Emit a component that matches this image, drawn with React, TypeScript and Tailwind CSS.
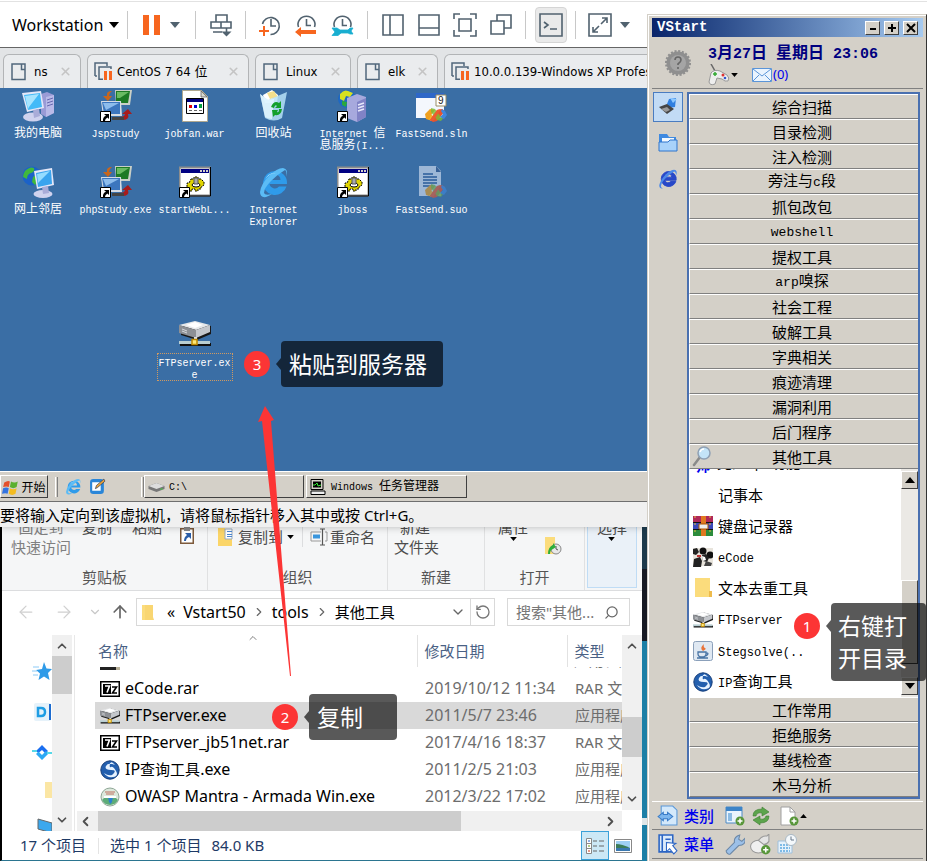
import type { ReactNode } from "react";
import { ArrowLeft, ArrowRight, ArrowUp, ChevronDown, ChevronLeft, ChevronRight, ChevronUp, RotateCw, Search, X } from "lucide-react";

const UI = "font-['Noto_Sans','Noto_Sans_CJK_SC',sans-serif]";
const SONG = "font-['Noto_Sans_CJK_SC',sans-serif]";
const MONO = "font-['Liberation_Mono','Noto_Sans_CJK_SC',monospace]";
const TAB = "font-['DejaVu_Sans_Condensed','Noto_Sans_CJK_SC',sans-serif]";
const RAISED = "border border-t-white border-l-white border-r-[#404040] border-b-[#404040] bg-[#d4d0c8]";

/* Half-width characters get a size (and face) of their own beside the full-width ones. */
function Mixed({ text, latin }: { text: string; latin: string }) {
  return (
    <>
      {text.split(/([\x20-\x7e]+)/).map((part, i) =>
        i % 2 ? <span key={i} className={latin}>{part}</span> : part
      )}
    </>
  );
}

function Song({ text, latin = "text-[10px]" }: { text: string; latin?: string }) {
  return <Mixed text={text} latin={`${MONO} ${latin}`} />;
}

function Caret({ className = "text-black", up = false }: { className?: string; up?: boolean }) {
  return (
    <svg width="10" height="6" viewBox="0 0 10 6" className={className} aria-hidden="true">
      <path d={up ? "M0 6h10L5 0z" : "M0 0h10L5 6z"} fill="currentColor" />
    </svg>
  );
}

function SmallCaret({ className = "", up = false }: { className?: string; up?: boolean }) {
  return (
    <svg width="7" height="4" viewBox="0 0 10 6" className={`shrink-0 ${className}`} aria-hidden="true">
      <path d={up ? "M0 6h10L5 0z" : "M0 0h10L5 6z"} />
    </svg>
  );
}

/* ---------- drawings ---------- */

function Svg({ size = 32, box = 32, children }: { size?: number; box?: number; children: ReactNode }) {
  return (
    <svg width={size} height={size} viewBox={`0 0 ${box} ${box}`} className="shrink-0" aria-hidden="true">
      {children}
    </svg>
  );
}

function Shortcut() {
  return (
    <g>
      <path d="M.5 21.500h10v10H.5z" fill="#fff" stroke="#000" />
      <path d="M4 24h5v5L7.500 27.500Q5 28.500 5 31H3Q2.500 27 6 25.700z" fill="#000" />
    </g>
  );
}

const computer = (
  <Svg>
    <path d="M19 4l6-2 7 3v18l-8 4-5-3z" fill="#9a9bd6" />
    <path d="M24 7l8-2v18l-8 4z" fill="#b9bae8" />
    <path d="M25 10l6-2M25 13l6-2M25 16l6-2" stroke="#6668b0" />
    <path d="M0 3l19-2 3 17-17 4z" fill="#e4e7f8" />
    <path d="M2 5l16-2 2 14-14 3z" fill="#42baf8" />
    <path d="M3 6l14-2-10 13-1 2z" fill="#a6e4ff" />
    <ellipse cx="11" cy="27" rx="10" ry="4.500" fill="#cfd2ee" />
    <path d="M11 20l6-1 1 7-6 2z" fill="#a9acd8" />
  </Svg>
);

const network = (
  <Svg>
    <circle cx="10" cy="10" r="9.500" fill="#1b62c8" />
    <path d="M3 5q5-5 9-3 1 4-3 5t-4 6l-4-2q0-3 2-6zM11 11l5-3 2 6-5 5-3-3z" fill="#41b83c" />
    <path d="M12 5l18-3 2 17-17 4z" fill="#e4e7f8" />
    <path d="M14 7l15-3 1 14-14 3z" fill="#3aa4ee" />
    <path d="M15 8l13-3-12 12z" fill="#95dcff" />
    <ellipse cx="21" cy="28" rx="9.500" ry="4" fill="#cfd2ee" />
    <path d="M20 21l6-1 1 7-6 1z" fill="#a9acd8" />
  </Svg>
);

const study = (
  <Svg>
    <path d="M15 0h17l-2 15H16z" fill="#c9cfc6" />
    <path d="M16 1h14l-2 12H16z" fill="#1d7a24" />
    <path d="M17 2h12l-9 6h-3z" fill="#69ba62" />
    <path d="M1 11h20l1 15H3z" fill="#d6dce4" />
    <path d="M2 12h18v12H4z" fill="#3c76be" />
    <path d="M3 13h16L6 20z" fill="#8dbcec" />
    <path d="M12 1Q6 1 7 6H3l5 5 4-5H9q0-3 3-5z" fill="#c8661c" />
    <path d="M22 30q8 0 6-6h4l-4-5-6 5h3q0 3-6 3z" fill="#a81c1c" />
    <path d="M12 27h12v3H12z" fill="#444" />
    <Shortcut />
  </Svg>
);

const warFile = (
  <Svg>
    <path d="M3.500.5h19l6 6v25h-25z" fill="#fff" stroke="#b0a890" />
    <path d="M22 1v6h6z" fill="#d8d8d0" stroke="#555" strokeWidth=".7" />
    <path d="M7.500 8.500h17v15h-17z" fill="#fff" stroke="#000" />
    <path d="M8 9h16v3H8z" fill="#00007c" />
    <path d="M10 15h3v3h-3z" fill="#e00000" />
    <path d="M15 15h3v3h-3z" fill="#0000d0" />
    <path d="M20 14h3v4h-3z" fill="#00a040" />
    <path d="M10 20.500h3m2 0h3m2 0h3" stroke="#666" />
  </Svg>
);

const recycle = (
  <Svg>
    <path d="M5 5l9-5 6 5-1 8H7z" fill="#fff" />
    <path d="M9 3l7-2 4 6-8 2z" fill="#f2df8c" />
    <path d="M2 4l8 6 19-8-5 26q-8 5-17 0z" fill="#b7e2f7" opacity=".85" />
    <path d="M2 4l8 6 6-1-2 20q-4 0-7-2z" fill="#e6f7ff" opacity=".8" />
    <path d="M13 17q3-7 8-4l2-2v7h-6l2-2q-2-2-3 2zM24 19q-1 7-7 6l-2 2-1-7h6l-1 2q2 1 2-3z" fill="#14a02c" />
  </Svg>
);

const iisServer = (
  <Svg>
    <circle cx="10" cy="9" r="9" fill="#1d68c4" />
    <path d="M3 4q4-5 8-3l5 2-3 4-4-1-2 5-4-2z" fill="#d7e020" />
    <path d="M5 11l5 1-1 5-4-2z" fill="#2aa83c" />
    <path d="M10 8l10-4 9 3v20l-9 5-10-4z" fill="#a7a9dd" />
    <path d="M20 12l9-4v19l-9 5z" fill="#8183c6" />
    <path d="M21 15l6-2M21 18l6-2M21 21l6-2" stroke="#e7e8fb" strokeWidth="1.500" />
    <Shortcut />
  </Svg>
);

const swoosh = (
  <g>
    <path d="M14 20l-4 4 2 5 3 2 3-4-3-3 2-2z" fill="#f5b52a" />
    <path d="M9 24l5-5 5 1-4 5-2 5-3-1z" fill="#f0a020" />
    <path d="M14 30l7-10 5-1 3 2-8 10-4 1z" fill="#e8532c" />
    <path d="M15 18l4 1 5 7 4 1-3 4-4-1-6-8z" fill="#7cbd34" opacity=".8" />
    <path d="M26 19l3 2 2 4-3 4-4-2 3-3-2-3z" fill="#3f87dd" />
    <path d="M14 30l7-10 4-1-7 11-3 1z" fill="#ee5c30" />
  </g>
);

const slnFile = (
  <Svg>
    <path d="M0 3h28v25H0z" fill="#f4f7fd" />
    <path d="M0 3h28v5H0z" fill="#2e67c8" />
    <path d="M20 5h10v11H20z" fill="#fff" stroke="#9a8d65" />
    <text x="22" y="14" fontSize="10" fill="#222" fontFamily="Liberation Sans">9</text>
    {swoosh}
  </Svg>
);

const suoFile = (
  <Svg>
    <g opacity=".6">
      <path d="M3 0h17l5 5v25H3z" fill="#dfe9f8" />
      <path d="M20 0v6h5z" fill="#34588e" />
      <path d="M7 8h10M7 11h14M7 14h14M7 17h14M7 20h10" stroke="#205090" strokeWidth="1.500" />
      {swoosh}
    </g>
  </Svg>
);

const ieGlyph = (size: number) => (
  <Svg size={size}>
    <path d="M17 5a12 12 0 1 0 11.500 15.500H21a5.500 5.500 0 0 1-9.500-2.500h17.500A12 12 0 0 0 17 5zM11.500 14a5.500 5.500 0 0 1 11 0z" fill="#2f9bea" fillRule="evenodd" />
    <path d="M28 11q3-8-3-9-6 0-14 8T2 26q0 6 6 5 3-1 6-3-7 2-8-1 0-5 7-12T27 4q2 1 1 7z" fill="#5bbcf6" />
    <path d="M7 14q3-8 11-7-7 0-11 7z" fill="#b8e6ff" />
  </Svg>
);

const gearWindow = (
  <Svg>
    <path d="M.5 1.500h31v28H.5z" fill="#fff" stroke="#8c8c8c" strokeWidth="2" />
    <path d="M31.500 1v29H1" fill="none" stroke="#000" />
    <path d="M2 3h28v4H2z" fill="#000082" />
    <path d="M21 4h2v2h-2zM24 4h2v2h-2zM27 4h2v2h-2z" fill="#d4d0c8" />
    <path d="M12 13h3v-2h4v2h3l3 3v3l-3 2v2h-3v2h-3v-2h-3v2h-3v-3H8v-5h2z" fill="#e0d400" stroke="#000" strokeDasharray="2 1" />
    <ellipse cx="17" cy="19" rx="4" ry="2" fill="#fff" stroke="#000" />
    <path d="M15 12h4v6h-4z" fill="#aaa" stroke="#555" />
    <Shortcut />
  </Svg>
);

const drive = (size: number) => (
  <Svg size={size}>
    <path d="M2 8l15-4 15 4v8l-14 6-16-5z" fill="#181818" />
    <path d="M0 7l16-4 15 4-14 5z" fill="#e6e8ea" />
    <path d="M0 7l17 5v8L0 15z" fill="#8d9095" />
    <path d="M17 12l14-5v7l-14 6z" fill="#c4c7cc" />
    <path d="M7 7l9-3 8 3-8 3z" fill="#fff" />
    <path d="M3 11l5 2M3 13l5 2" stroke="#d6d8dc" />
    <path d="M15 19h3v5h-3z" fill="#ddd" />
    <path d="M1 25h31v3H1z" fill="#111" />
    <path d="M0 23h31v3H0z" fill="#b8ced2" />
    <path d="M13 21.500h5v5h-5z" fill="#ffe878" stroke="#c08a00" strokeWidth="1.500" />
  </Svg>
);

const folder = (
  <svg width="20" height="20" viewBox="0 0 20 20" className="shrink-0" aria-hidden="true">
    <path d="M2 0h15v14l2 1v4H2z" fill="#fbdc7c" />
    <path d="M16 13h3v6h-3z" fill="#eebb4c" />
  </svg>
);

const sevenZip = (
  <svg width="20" height="16" viewBox="0 0 20 16" className="shrink-0" aria-hidden="true">
    <path d="M.75.75h18.500v14.500H.75z" fill="#fff" stroke="#000" strokeWidth="1.500" />
    <path d="M3 3h8v10H3z" />
    <path d="M5 5h4.500L7 11.500" stroke="#fff" strokeWidth="1.600" fill="none" />
    <path d="M12 6h4.500L12.500 12H17" stroke="#000" strokeWidth="1.600" fill="none" />
  </svg>
);

const ipTool = (
  <Svg size={20} box={20}>
    <circle cx="10" cy="10" r="9.200" fill="#235fae" stroke="#153c78" />
    <path d="M15 5Q8 2 6 6t5 4 1 5q-4 1-8-2 3 5 9 4t3-6-5-4-1-3 5 1z" fill="#e6f2ff" />
  </Svg>
);

const mantra = (
  <Svg size={20} box={20}>
    <circle cx="10" cy="10" r="9" fill="#dce8dc" stroke="#8fa796" />
    <path d="M2 13a9 9 0 0 0 16 0l-3-3H5z" fill="#5dab78" />
    <path d="M5 5h10M6 7h8" stroke="#c07060" />
    <path d="M8 10h5l-1 5-1.500 2L9 15z" fill="#2b80d0" />
    <path d="M4 9h12v2H4z" fill="#fff" />
  </Svg>
);

/* ---------- workstation toolbar ---------- */

function PageIcon() {
  return (
    <svg width="16" height="18" viewBox="0 0 16 18" className="shrink-0" aria-hidden="true">
      <path d="M10.500 1H1v15.500h13V7M10.500 1v5.500H14V1z" fill="none" stroke="#51677c" strokeWidth="1.500" />
    </svg>
  );
}

function PausedIcon() {
  return (
    <svg width="19" height="19" viewBox="0 0 19 19" className="shrink-0" aria-hidden="true">
      <path d="M1 14V1h12v3M5 18V5h12v2M1 14h2M5 17.300h4" fill="none" stroke="#51677c" strokeWidth="1.500" />
      <path d="M10 9h3v9h-3zM15 9h3v9h-3z" fill="#f7661f" />
    </svg>
  );
}

function Tool({ label, children }: { label: string; children: ReactNode }) {
  return (
    <button aria-label={label} className="flex w-9 shrink-0 items-center justify-center">
      <svg width="24" height="24" viewBox="0 0 24 24" fill="none" stroke="#51626f" strokeWidth="1.600" aria-hidden="true">
        {children}
      </svg>
    </button>
  );
}

function Group({ className, children }: { className: string; children: ReactNode }) {
  return <div className={`flex h-7 shrink-0 items-center border-r border-[#c8c8c8] ${className}`}>{children}</div>;
}

const clock = <path d="M4.500 14a8.500 8 0 1 1 16 0M12.500 6v6.500h4.500" />;

function Toolbar() {
  return (
    <header className={`flex h-[46px] items-center overflow-hidden border-b border-[#666] bg-white ${UI}`}>
      <Group className="w-32 pl-3">
        <button className="flex items-center gap-[6px] text-base">Workstation <Caret /></button>
      </Group>
      <Group className="w-[68px] justify-center gap-[10px]">
        <button aria-label="Suspend" className="flex gap-[5px]">
          <span className="h-5 w-[6px] bg-[#f7661f]" />
          <span className="h-5 w-[6px] bg-[#f7661f]" />
        </button>
        <button aria-label="Power options"><Caret className="text-[#51626f]" /></button>
      </Group>
      <Group className="w-[50px] justify-center">
        <Tool label="Send Ctrl+Alt+Del">
          <path d="M7 2h11v7H7zM2 9h20v6H2zM12 9v6M4 19h9M17.500 15v4" />
          <path d="M12.500 18.500h10l-5 5z" fill="#51626f" stroke="none" />
        </Tool>
      </Group>
      <Group className="w-[122px] pl-[6px]">
        <Tool label="Take snapshot">
          <path d="M4.500 11a8.500 8.500 0 1 1 8 10.500M13 6v7h5" />
          <path d="M1 18h10M6 13v10" stroke="#f7661f" strokeWidth="2" />
        </Tool>
        <Tool label="Revert snapshot">
          {clock}
          <path d="M1 19l6-5v3h15v4H7v3z" fill="#f7661f" stroke="none" />
        </Tool>
        <Tool label="Manage snapshots">
          {clock}
          <path d="M2 15h5l3 2h8l2-2h3l-2 3 2 3h-3l-2-1h-7l-3 2.500H2l3-3.500z" fill="#19aed0" stroke="#19aed0" strokeWidth=".8" />
        </Tool>
      </Group>
      <Group className="w-[158px] pl-[7px]">
        <Tool label="Show library"><path d="M2 2h20v20H2zM9 2v20" /></Tool>
        <Tool label="Show thumbnails"><path d="M2 2h20v20H2zM2 15h20" /></Tool>
        <Tool label="Full screen"><path d="M1 6V1h6M17 1h6v5M23 17v6h-6M7 23H1v-6M6 6h12v12H6z" /></Tool>
        <Tool label="Unity"><path d="M8 8V2h14v13h-7M2 8h13v13H2z" /></Tool>
      </Group>
      <Group className="w-[50px] justify-center">
        <button aria-label="Console view" className="flex h-9 w-8 shrink-0 items-center justify-center rounded border border-[#d5d5d5] bg-[#eaeaea]">
          <svg width="24" height="24" viewBox="0 0 24 24" fill="none" stroke="#51626f" strokeWidth="1.600" aria-hidden="true">
            <path d="M1 1h22v22H1zM5 9l4 3-4 3M11 16h7" />
          </svg>
        </button>
      </Group>
      <div className="flex items-center gap-[2px] pl-[6px]">
        <Tool label="Stretch guest">
          <path d="M1 1h22v22H1zM13 11l6-6M14 5h5v5M11 13l-6 6M5 14v5h5" />
        </Tool>
        <button aria-label="Stretch options"><Caret className="text-[#51626f]" /></button>
      </div>
    </header>
  );
}

function Tabs() {
  const tabs = [
    { name: "ns", paused: false, width: "w-[78px]" },
    { name: "CentOS 7 64 位", paused: true, width: "w-[162px]" },
    { name: "Linux", paused: false, width: "w-[96px]" },
    { name: "elk", paused: false, width: "w-[81px]" },
    { name: "10.0.0.139-Windows XP Professional", paused: true, width: "w-[300px]" },
  ];
  return (
    <nav className={`flex h-10 items-end gap-[6px] overflow-hidden bg-[#e2e4e6] pl-[3px] text-[13px] ${TAB}`}>
      {tabs.map((t) => (
        <div key={t.name} className={`flex h-[34px] shrink-0 items-center rounded-t-md border border-b-0 border-[#b2b4b6] bg-[#eaecee] pr-2 ${t.paused ? "pl-[6px]" : "pl-[7px]"} ${t.width}`}>
          <button className={`flex items-center whitespace-nowrap ${t.paused ? "gap-1" : "gap-[7px]"}`}>
            {t.paused ? <PausedIcon /> : <PageIcon />}
            {t.name}
          </button>
          <button aria-label={`Close ${t.name}`} className="ml-auto text-[#c4c4c4]"><X size={13} strokeWidth={3} /></button>
        </div>
      ))}
    </nav>
  );
}

/* ---------- guest desktop ---------- */

function DesktopIcon({ icon, label, picked = false }: { icon: ReactNode; label: string[]; picked?: boolean }) {
  return (
    <button className={`flex flex-col items-center text-xs leading-3 text-white ${picked ? "col-start-3 row-start-4" : ""}`}>
      {icon}
      <span className={picked ? "mt-[3px] w-[76px] border border-dotted border-[#d09a60] py-px" : "mt-1 whitespace-nowrap"}>
        {label.map((line) => (
          <span key={line} className="block h-3 text-left whitespace-pre first:text-center last:text-center"><Song text={line} /></span>
        ))}
      </span>
    </button>
  );
}

function Desktop() {
  return (
    <section className={`grid h-[383px] auto-rows-[76px] grid-cols-[76px_79px_79px_79px_79px_79px] overflow-hidden bg-[#3a6ea5] pt-[2px] ${SONG}`}>
      <DesktopIcon icon={computer} label={["我的电脑"]} />
      <DesktopIcon icon={study} label={["JspStudy"]} />
      <DesktopIcon icon={warFile} label={["jobfan.war"]} />
      <DesktopIcon icon={recycle} label={["回收站"]} />
      <DesktopIcon icon={iisServer} label={["Internet 信", "息服务(I..."]} />
      <DesktopIcon icon={slnFile} label={["FastSend.sln"]} />
      <DesktopIcon icon={network} label={["网上邻居"]} />
      <DesktopIcon icon={study} label={["phpStudy.exe"]} />
      <DesktopIcon icon={gearWindow} label={["startWebL..."]} />
      <DesktopIcon icon={ieGlyph(32)} label={["Internet", "Explorer"]} />
      <DesktopIcon icon={gearWindow} label={["jboss"]} />
      <DesktopIcon icon={suoFile} label={["FastSend.suo"]} />
      <DesktopIcon icon={drive(32)} label={["FTPserver.ex", "e"]} picked />
    </section>
  );
}

function Grip() {
  return <span className="h-5 w-[3px] border-r border-l border-r-[#808080] border-l-white" />;
}

function Taskbar() {
  return (
    <footer className={`flex h-[31px] items-center border-t border-b border-t-white border-b-[#707070] bg-[#d4d0c8] text-xs leading-4 ${SONG}`}>
      <button className={`flex h-[23px] w-12 items-center justify-center gap-px ${RAISED}`}>
        <Svg size={18} box={16}>
          <path d="M2 4q3-2 5-1L6 8Q4 7 1 8z" fill="#e4502c" />
          <path d="M8 3q3 2 6 0l-1 5q-3 2-6 0z" fill="#5cb030" />
          <path d="M1 9q3-1 5 0l-1 5q-2-1-5 0z" fill="#3474e0" />
          <path d="M7 9q3 2 6 0l-1 5q-3 2-6 0z" fill="#f4bc20" />
        </Svg>
        开始
      </button>
      <div className="flex w-24 items-center gap-[7px] pl-[7px]">
        <Grip />
        <button aria-label="Internet Explorer">{ieGlyph(17)}</button>
        <button aria-label="Show desktop">
          <Svg size={17} box={16}>
            <rect x="1" y="1" width="13" height="14" rx="3" fill="#2a86d8" />
            <path d="M3 4h8v8H3z" fill="#fff" />
            <path d="M6 10l1-3 7-6 1 2-7 6z" fill="#e8a33c" stroke="#235" strokeWidth=".6" />
          </Svg>
        </button>
        <span className="ml-auto flex"><Grip /></span>
      </div>
      <button className={`flex h-[23px] w-40 items-center gap-1 pl-[3px] ${RAISED}`}>
        <svg width="17" height="16" viewBox="0 0 16 16" aria-hidden="true">
          <path d="M0 7l8-3 8 3v3l-8 3-8-3z" fill="#777" />
          <path d="M0 7l8-3 8 3-8 3z" fill="#ddd" />
          <path d="M12 10h2" stroke="#3d3" />
        </svg>
        <span><Song text="C:\" /></span>
      </button>
      <button className={`ml-[2px] flex h-[23px] w-[161px] items-center gap-1 pl-[3px] whitespace-pre ${RAISED}`}>
        <svg width="17" height="16" viewBox="0 0 17 16" aria-hidden="true">
          <path d="M1 .5h12v10H1z" fill="#d4d0c8" stroke="#000" />
          <path d="M3 2.500h8v6H3z" />
          <path d="M3 6h2l2-2 1 3 3-1" stroke="#3e3" fill="none" />
          <path d="M1 12h14v3.500H1z" fill="#eee" stroke="#000" />
        </svg>
        <span><Song text="Windows 任务管理器" /></span>
      </button>
    </footer>
  );
}

/* ---------- file explorer ---------- */

function RibbonGroup({ name, className, children }: { name: string; className: string; children: ReactNode }) {
  return (
    <div className={`flex shrink-0 flex-col ${className}`}>
      <div className="-mt-[10px] flex h-[50px] overflow-hidden">{children}</div>
      <span className="text-center leading-5 text-[#555]">{name}</span>
    </div>
  );
}

function Ribbon() {
  return (
    <div className="flex h-16 overflow-hidden border-b border-[#dcdddf] bg-[#f5f6f7] text-[15px] leading-5 text-[#4c4c4c]">
      <RibbonGroup name="剪贴板" className="w-[206px] border-r border-[#e0e1e2]">
        <button className="ml-2 w-[62px] shrink-0 self-start text-[#808080]">固定到<br />快速访问</button>
        <button className="ml-[10px] self-start">复制</button>
        <button className="ml-5 self-start">粘贴</button>
        <button aria-label="粘贴快捷方式" className="ml-[18px] self-start pt-[10px]">
          <svg width="14" height="17" viewBox="0 0 14 17" aria-hidden="true">
            <path d="M.75 1.750h12.500v14.500H.75z" fill="#fff" stroke="#7d5a3c" strokeWidth="1.500" />
            <path d="M4 0h6v4H4z" fill="#8a8a8a" />
            <path d="M5 6h6v6l-2-2q-3 1-3 4H4q0-4 3-6z" fill="#2a5ea8" />
          </svg>
        </button>
      </RibbonGroup>
      <RibbonGroup name="组织" className="w-[180px] border-r border-[#e0e1e2]">
        <button className="ml-[10px] flex shrink-0 items-center gap-[3px] self-start pt-[10px]">
          <svg width="17" height="18" viewBox="0 0 17 18" aria-hidden="true">
            <path d="M0 0h7v11h7v7H0z" fill="#fbd568" />
            <path d="M7 1h7v10H7z" fill="#fff" stroke="#9ab" />
            <path d="M9 3h5v1H9zM9 6h5v1H9zM9 8h5v1H9z" fill="#4a86d0" />
          </svg>
          复制到
          <SmallCaret className="ml-px" />
        </button>
        <button className="ml-2 flex shrink-0 items-center gap-[2px] self-start border-l border-[#dcdddf] pt-[10px] pl-[7px]">
          <svg width="18" height="18" viewBox="0 0 18 18" fill="none" aria-hidden="true">
            <path d="M11 4H1v9h10M15 4h2v9h-2" stroke="#999" />
            <path d="M3 6.500h7v4H3z" fill="#3a96dd" />
            <path d="M10 1h5M12.500 1v16M10 17h5" stroke="#555" strokeWidth="1.200" />
          </svg>
          重命名
        </button>
      </RibbonGroup>
      <RibbonGroup name="新建" className="w-[97px] border-r border-[#e0e1e2]">
        <button className="ml-[6px] self-start text-left"><span className="pl-[6px]">新建</span><br />文件夹</button>
      </RibbonGroup>
      <RibbonGroup name="打开" className="w-[100px] border-r border-[#e0e1e2]">
        <button className="ml-[13px] flex flex-col items-center self-start">
          属性
          <SmallCaret />
        </button>
        <button aria-label="历史记录" className="ml-4 pt-2">
          <svg width="18" height="18" viewBox="0 0 18 18" aria-hidden="true">
            <path d="M1 0h10v17H1z" fill="#fbdc7c" />
            <circle cx="12" cy="12" r="5" fill="#e8e8e8" stroke="#888" />
            <path d="M12 9v3l2 1" fill="none" stroke="#555" />
            <path d="M4 17q0-7 5-9v-2l3 4-3 2Q6 13 6 17z" fill="#2fae3a" />
          </svg>
        </button>
      </RibbonGroup>
      <div className="ml-[2px] flex h-[61px] w-[50px] flex-col items-center border border-t-0 border-[#bfdcf5] bg-[#eaf1f8]">
        <button className="-mt-[10px] flex flex-col items-center">
          选择
          <SmallCaret />
        </button>
      </div>
    </div>
  );
}

function AddressBar() {
  return (
    <div className="flex h-11 items-center pr-3 pb-[2px] pl-[14px] text-base leading-6">
      <button aria-label="后退" className="text-[#d0d0d0]"><ArrowLeft size={20} strokeWidth={1.500} /></button>
      <button aria-label="前进" className="ml-[18px] text-[#d0d0d0]"><ArrowRight size={20} strokeWidth={1.500} /></button>
      <button aria-label="最近位置" className="ml-[14px] text-[#c8c8c8]"><ChevronDown size={14} /></button>
      <button aria-label="上移" className="ml-2 text-[#666]"><ArrowUp size={20} strokeWidth={2} /></button>
      <nav className="ml-[6px] flex h-7 min-w-0 flex-1 items-center border border-[#d9d9d9]">
        <svg width="13" height="17" viewBox="0 0 13 17" className="ml-[5px] shrink-0" aria-hidden="true">
          <path d="M0 1h6v15H0z" fill="#fbdc7c" />
          <path d="M3 1h8v12l1 3H3z" fill="#f9d672" />
        </svg>
        <span className="ml-3">«</span>
        <button className="ml-2">Vstart50</button>
        <ChevronRight size={14} className="ml-[6px] shrink-0 text-[#666]" />
        <button className="ml-[6px]">tools</button>
        <ChevronRight size={14} className="ml-[6px] shrink-0 text-[#666]" />
        <button className="ml-[6px] text-[15px] whitespace-nowrap">其他工具</button>
        <button aria-label="历史位置" className="mr-1 ml-auto text-[#666]"><ChevronDown size={16} /></button>
        <button aria-label="刷新" className="flex h-full w-6 shrink-0 items-center justify-center border-l border-[#d9d9d9] text-[#777]"><RotateCw size={16} className="-scale-x-100" /></button>
      </nav>
      <div className="ml-3 flex h-7 w-[123px] items-center border border-[#d9d9d9] pr-[10px] pl-2">
        <input aria-label="搜索" placeholder={'搜索"其他...'} className="w-0 min-w-0 flex-1 text-[15px] outline-none placeholder:text-[#767676]" />
        <Search size={15} className="-scale-x-100 text-[#666]" />
      </div>
    </div>
  );
}

function VScroll({ offset, thumb }: { offset: string; thumb: string }) {
  return (
    <div className="flex w-5 shrink-0 flex-col items-center bg-[#f0f0f0] text-[#505050]">
      <ChevronUp size={14} strokeWidth={3} className="mt-1 shrink-0" />
      <div className={`w-full shrink-0 bg-[#cdcdcd] ${offset} ${thumb}`} />
      <ChevronDown size={14} strokeWidth={3} className="mt-auto mb-1 shrink-0" />
    </div>
  );
}

function Files() {
  const rows = [
    { icon: sevenZip, name: "eCode.rar", date: "2019/10/12 11:34", kind: "RAR 文件" },
    { icon: drive(20), name: "FTPserver.exe", date: "2011/5/7 23:46", kind: "应用程序", picked: true },
    { icon: sevenZip, name: "FTPserver_jb51net.rar", date: "2017/4/16 18:37", kind: "RAR 文件" },
    { icon: ipTool, name: "IP查询工具.exe", date: "2011/2/5 21:03", kind: "应用程序" },
    { icon: mantra, name: "OWASP Mantra - Armada Win.exe", date: "2012/3/22 17:02", kind: "应用程序" },
  ];
  return (
    <div className="relative min-w-0 flex-1 pl-5">
      <ChevronUp size={12} strokeWidth={1.500} className="absolute top-[-3px] left-[172px] text-[#555]" />
      <table className="w-full table-fixed border-collapse text-left text-[15px] whitespace-nowrap">
        <colgroup>
          <col />
          <col className="w-[150px]" />
          <col className="w-[55px]" />
        </colgroup>
        <thead>
          <tr className="h-8 text-[#4a6184]">
            <th className="p-0 pl-[3px] font-normal">名称</th>
            <th className="border-l border-[#e2e2e2] p-0 pl-[7px] font-normal">修改日期</th>
            <th className="border-l border-[#e2e2e2] p-0 pl-[7px] font-normal">类型</th>
          </tr>
        </thead>
        <tbody>
          <tr aria-hidden="true">
            <td className="p-0 pl-[5px]">
              <div className="flex h-2 items-start overflow-hidden"><span className="h-[3px] w-4 bg-[#222]" /><span className="h-[3px] w-1 bg-[#b8b098]" /></div>
            </td>
            <td />
            <td className="p-0 pl-[7px] text-[#6d6d6d]">
              <div className="flex h-2 items-end overflow-hidden leading-[29px]">应用程序</div>
            </td>
          </tr>
          {rows.map((r) => (
            <tr key={r.name} className={`h-[27px] leading-[27px] ${r.picked ? "bg-[#d9d9d9]" : ""}`}>
              <td className="p-0 pl-[5px]">
                <div className="flex h-[27px] items-center gap-[5px]">{r.icon}<span><Mixed text={r.name} latin="text-base leading-[27px]" /></span></div>
              </td>
              <td className="p-0 pl-2 text-base leading-[27px] text-[#6d6d6d]">{r.date}</td>
              <td className="overflow-hidden p-0 pl-2 text-[#6d6d6d]">{r.kind}</td>
            </tr>
          ))}
        </tbody>
      </table>
    </div>
  );
}

function Explorer() {
  return (
    <section className={`flex flex-1 flex-col border-b border-l-2 border-b-[#2b7590] border-l-black bg-white ${UI}`}>
      <Ribbon />
      <AddressBar />
      <div className="flex h-[196px]">
        <aside className="flex w-[50px] flex-col items-end gap-5 overflow-hidden pt-[27px]">
          <Svg size={20} box={20}>
            <path d="M12 0l2.500 6.500 5.500.5-4 4 1.500 7-5.500-3.500L6.500 18 8 11.500 4 8l6-1z" fill="#2f9be8" />
            <path d="M1 5h6M0 9h5M1 13h5" stroke="#8ccaf6" />
          </Svg>
          <Svg size={20} box={20}>
            <rect x="2" y="1" width="17" height="18" rx="2" fill="#e6f2fa" />
            <path d="M6 6h3q4 0 4 4t-4 4H6z" fill="none" stroke="#1e9de4" strokeWidth="2.500" />
            <path d="M18 2v16" stroke="#1c6cd0" strokeWidth="2" />
          </Svg>
          <Svg size={20} box={20}>
            <path d="M10 3l6 6-2.500 2.500L10 8l-3.500 3L4 9z" fill="#1a6ef0" />
            <path d="M10 18l-6-6 2.500-2.500L10 13l4-4 3 2z" fill="#2ba8f4" />
            <path d="M0 9h5M15 11h5" stroke="#56d8e8" strokeWidth="2" />
          </Svg>
          <span className="h-4 w-[7px] shrink-0 bg-[#fbe6a4]" />
          <Svg size={20} box={20}>
            <path d="M6 1l14 4v10L6 11z" fill="#3ca8ee" stroke="#666" />
            <path d="M0 14l8-1 8 3-8 2z" fill="#c8ccd0" />
          </Svg>
        </aside>
        <VScroll offset="mt-[3px]" thumb="h-[38px]" />
        <div className="ml-[2px] flex min-w-0 flex-1 border-l border-[#e8e8e8]">
          <div className="flex min-w-0 flex-1 flex-col">
            <div className="flex h-[175px] overflow-hidden"><Files /></div>
            <div className="mt-px ml-[2px] flex h-5 items-center bg-[#f0f0f0] text-[#505050]">
              <ChevronLeft size={15} strokeWidth={3} className="mr-[5px] ml-px shrink-0" />
              <div className="h-full w-[363px] bg-[#cdcdcd]" />
              <ChevronRight size={15} strokeWidth={3} className="mr-1 ml-auto shrink-0" />
            </div>
          </div>
          <div className="mb-[21px] flex"><VScroll offset="mt-16" thumb="h-10" /></div>
        </div>
      </div>
      <div className="flex h-[29px] items-center pl-[18px] text-[15px] whitespace-pre text-[#1e3a66]">
        <span>17 个项目</span>
        <span className="ml-3 h-4 border-l border-[#e4e4e4]" />
        <span className="ml-[11px]">选中 1 个项目</span>
        <span className="ml-[10px]">84.0 KB</span>
        <button aria-label="详细信息" className="mr-[5px] ml-auto flex h-[29px] w-7 items-center justify-center border border-[#3aa0d8] bg-[#cce8f6]">
          <svg width="18" height="16" viewBox="0 0 18 16" fill="none" aria-hidden="true">
            <path d="M.5.5h5v15h-5zM.5 5.500h5M.5 10.500h5" fill="#fff" stroke="#888" />
            <path d="M2 2.500h2v1H2z" fill="#26c" /><path d="M2 7.500h2v1H2z" fill="#691" /><path d="M2 12.500h2v1H2z" fill="#c31" />
            <path d="M7 3h4m2 0h5M7 8h4m2 0h5M7 13h4m2 0h5" stroke="#666" />
          </svg>
        </button>
        <button aria-label="大图标" className="mr-[10px]">
          <svg width="18" height="14" viewBox="0 0 18 14" aria-hidden="true">
            <path d="M.5.5h17v13H.5z" fill="#fff" stroke="#888" />
            <path d="M2 2h14v10H2z" fill="#9fd0f4" />
            <path d="M2 5q6 0 14 4v1H2z" fill="#3c7c58" /><path d="M2 9h14v3H2z" fill="#3a78b0" />
          </svg>
        </button>
      </div>
    </section>
  );
}

/* ---------- VStart launcher ---------- */

function Category({ name, icon }: { name: string; icon?: ReactNode }) {
  return (
    <button className="relative flex h-[25px] w-full items-center justify-center border-t border-b border-l border-t-white border-b-[#808080] border-l-white bg-[#d4d0c8] pr-1 text-[15px] leading-5">
      {icon && <span className="absolute top-0 left-px">{icon}</span>}
      <span><Song text={name} latin="text-[13px]" /></span>
    </button>
  );
}

const categories = ["综合扫描", "目录检测", "注入检测", "旁注与c段", "抓包改包", "webshell", "提权工具", "arp嗅探", "社会工程", "破解工具", "字典相关", "痕迹清理", "漏洞利用", "后门程序"];

const magnifier = (
  <Svg size={22} box={22}>
    <path d="M9 12l-6 8" stroke="#8a8a8a" strokeWidth="2.500" strokeLinecap="round" />
    <circle cx="13" cy="8" r="6" fill="#c4e4f8" stroke="#8fa0b4" strokeWidth="1.500" />
    <path d="M9 7q1-3 4-3" stroke="#fff" strokeWidth="1.500" fill="none" />
  </Svg>
);

const books = (
  <Svg size={20} box={20}>
    <path d="M0 0h20v6H0z" fill="#b02858" /><path d="M0 7h20v6H0z" fill="#3c48b8" /><path d="M0 14h20v6H0z" fill="#2c8c3c" />
    <path d="M0 6h20v1H0zM0 13h20v1H0z" fill="#111" />
    <path d="M8 0h5v20H8z" fill="#e07820" /><path d="M6 8h9v5H6z" fill="#eee" stroke="#a50" />
    <path d="M2 0v20M17 0v20" stroke="#e8c040" strokeDasharray="2 5" />
  </Svg>
);

const ecode = (
  <Svg size={20} box={20}>
    <path d="M0 1h20v18H0z" fill="#e8e4dc" />
    <circle cx="10" cy="4" r="3.500" fill="#111" />
    <circle cx="17" cy="8" r="3.500" fill="#111" />
    <path d="M0 2l4-1 2 4-3 3-3-1zM1 12l6-2 2 4-1 6H0zM9 8l4-1 3 4-2 4-4-1z" fill="#222" />
    <path d="M9 9l3 1 1 3-3 1z" fill="#fff" /><path d="M4 8h4v2H4z" fill="#b33" /><path d="M13 14l6 2-1 3h-7z" fill="#444" />
  </Svg>
);

const java = (
  <Svg size={20} box={20}>
    <rect x=".5" y=".5" width="19" height="19" rx="2" fill="#dfe8f2" stroke="#8ba0ba" />
    <path d="M10 10q-4-3 1-7-1 3 1 4t-2 3" fill="#e8743c" />
    <path d="M5 11h8v2q0 3-4 3t-4-3zM13 12q4 0 0 3M4 17h11" fill="none" stroke="#4873a4" strokeWidth="1.300" />
  </Svg>
);

function ToolList() {
  const items: { icon: ReactNode; name: string }[] = [
    { icon: <span className="size-5" />, name: "记事本" },
    { icon: books, name: "键盘记录器" },
    { icon: ecode, name: "eCode" },
    { icon: folder, name: "文本去重工具" },
    { icon: drive(20), name: "FTPserver" },
    { icon: java, name: "Stegsolve(.." },
    { icon: ipTool, name: "IP查询工具" },
  ];
  return (
    <div className="flex h-[228px] overflow-hidden bg-white">
      <div className="flex min-w-0 flex-1 flex-col pl-1 text-[15px]">
        <div className="flex h-[10px] shrink-0 items-end gap-1 overflow-hidden leading-[29px]">
          <span className="w-5 text-center font-bold text-[#0000ee]">师</span>
          <span className="whitespace-pre"><Song text="克隆ip 功能" latin="text-[13px]" /></span>
        </div>
        <ul className="flex h-[219px] shrink-0 flex-col">
          {items.map((it) => (
            <li key={it.name} className="flex flex-1">
              <button className="flex items-center gap-[5px] leading-5">
                {it.icon}
                <span><Song text={it.name} latin="text-[12px]" /></span>
              </button>
            </li>
          ))}
        </ul>
      </div>
      <div className="flex w-[17px] flex-col bg-[#ebe9e5] pt-[2px] pb-[2px]">
        <span className={`flex h-[18px] shrink-0 items-center justify-center ${RAISED}`}><Caret up /></span>
        <span className={`mt-[91px] h-[84px] shrink-0 ${RAISED}`} />
        <span className={`mt-auto flex h-[18px] shrink-0 items-center justify-center ${RAISED}`}><Caret /></span>
      </div>
    </div>
  );
}

const plus = (
  <g>
    <circle cx="15" cy="15" r="4.500" fill="#58963a" />
    <path d="M12.500 15h5M15 12.500v5" stroke="#fff" strokeWidth="1.500" />
  </g>
);

function TitleButton({ label, d }: { label: string; d: string }) {
  return (
    <button aria-label={label} className={`flex h-[14px] w-[15px] items-center justify-center ${RAISED}`}>
      <svg width="10" height="10" viewBox="0 0 10 10" aria-hidden="true"><path d={d} stroke="#000" strokeWidth="2" /></svg>
    </button>
  );
}

function Launcher() {
  return (
    <aside className={`relative mt-3 flex w-[280px] shrink-0 flex-col border-t border-r border-l border-t-[#d4d0c8] border-r-[#333] border-l-[#d4d0c8] bg-[#d4d0c8] ${SONG}`}>
      <div className="flex flex-1 flex-col border-t border-l border-white px-[3px] pt-[2px]">
        <div className="flex h-[19px] items-center gap-1 bg-linear-to-r from-[#0a246a] to-[#a6caf0] pr-[5px] pl-[5px]">
          <h1 className={`mr-auto text-[14px] font-bold text-white ${MONO}`}>VStart</h1>
          <TitleButton label="最小化" d="M2 6h6" />
          <TitleButton label="最大化" d="M1 5h8M5 1v8" />
          <TitleButton label="关闭" d="M1 1l8 8M9 1L1 9" />
        </div>
        <div className="flex h-[52px] items-center border-b border-[#808080] pl-3">
          <Svg size={28} box={28}>
            <circle cx="14" cy="14" r="11.500" fill="#8f8f8f" stroke="#8f8f8f" strokeWidth="3" strokeDasharray="2 1.600" />
            <circle cx="14" cy="14" r="8" fill="#a5a5a5" />
            <path d="M11 11q0-3 3-3t3 3q0 2-3 4v1M14 18v2" fill="none" stroke="#666" strokeWidth="1.600" />
          </Svg>
          <div className="ml-4">
            <p className="text-base leading-5 font-bold whitespace-pre text-[#000080]"><Song text="3月27日 星期日 23:06" latin="text-[15px]" /></p>
            <div className="flex h-5 items-center">
              <button aria-label="游戏" className="flex items-center gap-px">
                <Svg size={22} box={22}>
                  <path d="M3 0l4 7" stroke="#666" strokeWidth="1.500" />
                  <path d="M3 9q3-4 9-2l7 4q3 3 1 6-3 1-6-2l-5-1-2 6q-5 2-6-2z" fill="#eee" stroke="#999" />
                  <path d="M5 10h4M7 8v4" stroke="#3a3" strokeWidth="1.500" />
                  <circle cx="15" cy="11" r="1.500" fill="#d33" /><circle cx="17" cy="14" r="1.300" fill="#35c" />
                </Svg>
                <SmallCaret />
              </button>
              <button className={`ml-[14px] flex items-center gap-px text-[13px] text-[#0000ee] ${UI}`}>
                <svg width="20" height="14" viewBox="0 0 20 14" aria-hidden="true">
                  <path d="M.5.5h19v13H.5z" fill="#eaf4fe" stroke="#5b95d8" />
                  <path d="M1 1l9 7 9-7M1 13l6-6M19 13l-6-6" fill="none" stroke="#5b95d8" />
                </svg>
                (0)
              </button>
            </div>
          </div>
        </div>
        <div className="mt-[3px] flex gap-1 pr-[3px] pl-px">
          <nav className="flex w-[30px] flex-col items-center">
            <button aria-label="程序" className="flex size-[30px] items-center justify-center border border-[#4a7cc0] bg-[#c2dbf5]">
              <Svg size={20} box={20}>
                <path d="M9 7l2-5 7-1-1 9-7 1z" fill="#2f7fe0" /><path d="M12 1l3 5 4-4" fill="#8cc8ff" />
                <path d="M1 10l8-3 7 5-7 5z" fill="#444" /><path d="M3 12l6-2 3 3-4 2z" fill="#999" />
              </Svg>
            </button>
            <button aria-label="文件夹" className="mt-[11px]">
              <Svg size={20} box={20}>
                <path d="M1 1h8l2 3h7v14H1z" fill="#3f8ae0" /><path d="M4 5h12v8H4z" fill="#f4faff" />
                <path d="M1 18V9h9l2-2h7v11z" fill="#a8d2fa" stroke="#2e74cc" />
              </Svg>
            </button>
            <button aria-label="网址" className="mt-4">
              <Svg size={20}>
                <path d="M17 4a12 12 0 1 0 11.500 16H20a5 5 0 0 1-9-2h18A12 12 0 0 0 17 4zM11 13a5 5 0 0 1 11 0z" fill="#2848c8" fillRule="evenodd" stroke="#2848c8" strokeWidth="1.500" />
                <path d="M29 10q3-8-3-9-6 0-14 8T2 26q0 6 6 5-4-1-3-5 1-5 8-12T26 4q3 1 3 6z" fill="#4b88e8" />
              </Svg>
            </button>
          </nav>
          <div className="min-w-0 flex-1 border-2 border-[#4a70b0]">
            {categories.map((c) => <Category key={c} name={c} />)}
            <Category name="其他工具" icon={magnifier} />
            <ToolList />
            {["工作常用", "拒绝服务", "基线检查", "木马分析"].map((c) => <Category key={c} name={c} />)}
          </div>
        </div>
        <div className="mt-[2px] flex h-[29px] items-center border-t border-b border-t-white border-b-[#808080] pl-[5px] text-[15px] leading-5 text-[#0000ee]">
          <button className="flex items-center gap-[6px] font-medium">
            <Svg size={21} box={20}>
              <path d="M4 1h11l4 4v14H4z" fill="#d4e9fb" stroke="#5a98d8" />
              <path d="M1 11l5-4v2h4V7l5 4-5 4v-2H6v2z" fill="#7db6ee" stroke="#3a7cc8" />
            </Svg>
            类别
          </button>
          <button aria-label="添加窗口" className="ml-[11px]">
            <Svg size={20} box={20}>
              <path d="M1 1h16v16H1z" fill="#eaf4fd" stroke="#4c8ac4" /><path d="M1 1h16v4H1z" fill="#3c84c8" />
              <path d="M3 7h4v8H3z" fill="#8cbce4" />{plus}
            </Svg>
          </button>
          <button aria-label="刷新" className="ml-[6px]">
            <Svg size={20} box={20}>
              <path d="M2 10q0-7 9-7V1l7 5-7 4V7Q6 6 5 10zM18 10q0 7-9 7v2l-7-5 7-4v3q5 1 6-3z" fill="#5ca44c" stroke="#3a7c30" strokeWidth=".6" />
            </Svg>
          </button>
          <button aria-label="新建" className="ml-2 flex items-center gap-px">
            <Svg size={20} box={20}>
              <path d="M2 1h9l5 5v13H2z" fill="#fff" stroke="#a0a0a0" /><path d="M11 1v5h5" fill="none" stroke="#a0a0a0" />{plus}
            </Svg>
            <SmallCaret up />
          </button>
        </div>
        <div className="flex h-[29px] items-center border-b border-[#808080] pl-[5px] text-[15px] leading-5 text-[#0000ee]">
          <button className="flex items-center gap-[6px] font-medium">
            <Svg size={21} box={20}>
              <path d="M2 1h13v16H2z" fill="#dcebfa" stroke="#2a64c4" strokeWidth="1.500" /><path d="M5 1v16M8 5h5" stroke="#2a64c4" strokeWidth="1.500" />
              <path d="M9 8l9 1-3 2 4 5-3 3-4-5-3 3z" fill="#fff" stroke="#2a64c4" />
            </Svg>
            菜单
          </button>
          <button aria-label="设置" className="ml-[10px]">
            <Svg size={21} box={20}>
              <path d="M2 16l8-8q-1-5 5-7l-1 4 3 2 3-3q1 7-6 7l-8 8q-3 1-4-3z" fill="#9cc0e8" stroke="#6b88a8" />
            </Svg>
          </button>
          <button aria-label="添加设备" className="ml-[5px]">
            <Svg size={21} box={20}>
              <ellipse cx="8" cy="12" rx="7.500" ry="6" fill="#f0f0f0" stroke="#999" /><path d="M8 6q4-5 8-4l2-2v7q-2 3-5 3z" fill="#e4e4e4" stroke="#999" />{plus}
            </Svg>
          </button>
          <button aria-label="日程" className="ml-[6px]">
            <Svg size={20} box={20}>
              <path d="M1 7h14v12H1z" fill="#e4f1fb" stroke="#9fc0dc" /><path d="M3 11h10M3 14h10M3 17h10" stroke="#5ca8e0" strokeDasharray="2 1" strokeWidth="1.500" />
              <circle cx="14" cy="6" r="5.500" fill="#f4f8fb" stroke="#a8b8c4" /><path d="M14 2.500V6h3" fill="none" stroke="#678" />
            </Svg>
          </button>
        </div>
      </div>
      <div className="absolute top-[588px] right-0 flex items-center">
        <Note step={1}>右键打<br />开目录</Note>
      </div>
    </aside>
  );
}

/* Numbered step marker with its speech-bubble caption. */
function Note({ step, children }: { step: number; children: ReactNode }) {
  return (
    <div className={`flex items-center text-white ${UI}`}>
      <span className={`flex size-[26px] items-center justify-center rounded-full bg-[#fc3535] text-[15px] leading-5 ${step === 1 ? "mb-8" : ""}`}>{step}</span>
      <span className={`ml-[6px] h-3 w-[5px] bg-black/65 [clip-path:polygon(100%_0,100%_100%,0_50%)] ${step === 1 ? "mb-8" : ""}`} />
      <p className={`rounded bg-black/65 py-[7px] text-[23px] leading-8 ${step === 1 ? "w-[95px] pl-[7px]" : step === 2 ? "w-[88px] pl-2" : "w-[162px] pl-2"}`}>{children}</p>
    </div>
  );
}

export default function App() {
  return (
    <main className="relative min-h-screen overflow-hidden bg-white pt-px text-black">
      <div className="border-t border-[#e2e2e2]" />
      <div className="flex">
        <div className="flex min-w-0 flex-1 flex-col">
          <Toolbar />
          <Tabs />
          <Desktop />
          <Taskbar />
          <p className={`relative h-[25px] bg-[#f0f0f0] text-[15px] leading-[26px] whitespace-nowrap shadow-md ${UI}`}>要将输入定向到该虚拟机，请将鼠标指针移入其中或按 Ctrl+G。</p>
          <div className="flex flex-1">
            <div className="flex min-w-0 flex-1 flex-col"><Explorer /></div>
            <div className="flex w-[5px] flex-col bg-[#1c7fa6]">
              <span className="h-[42px] bg-[#1d3a4c]" />
              <span className="h-[72px] bg-[#171a24]" />
              <span className="mt-[177px] h-[7px] bg-[#dfe6e8]" />
            </div>
          </div>
        </div>
        <Launcher />
      </div>
      <svg width="36" height="272" viewBox="0 0 36 272" className="absolute top-[405px] left-[257px]" aria-hidden="true">
        <path d="M8 1l9 14-3 1 20 255h-1L5 16l-4 1z" fill="#fc3535" />
      </svg>
      <div className="absolute top-[341px] left-[244px]"><Note step={3}>粘贴到服务器</Note></div>
      <div className="absolute top-[694px] left-[272px]"><Note step={2}>复制</Note></div>
    </main>
  );
}
